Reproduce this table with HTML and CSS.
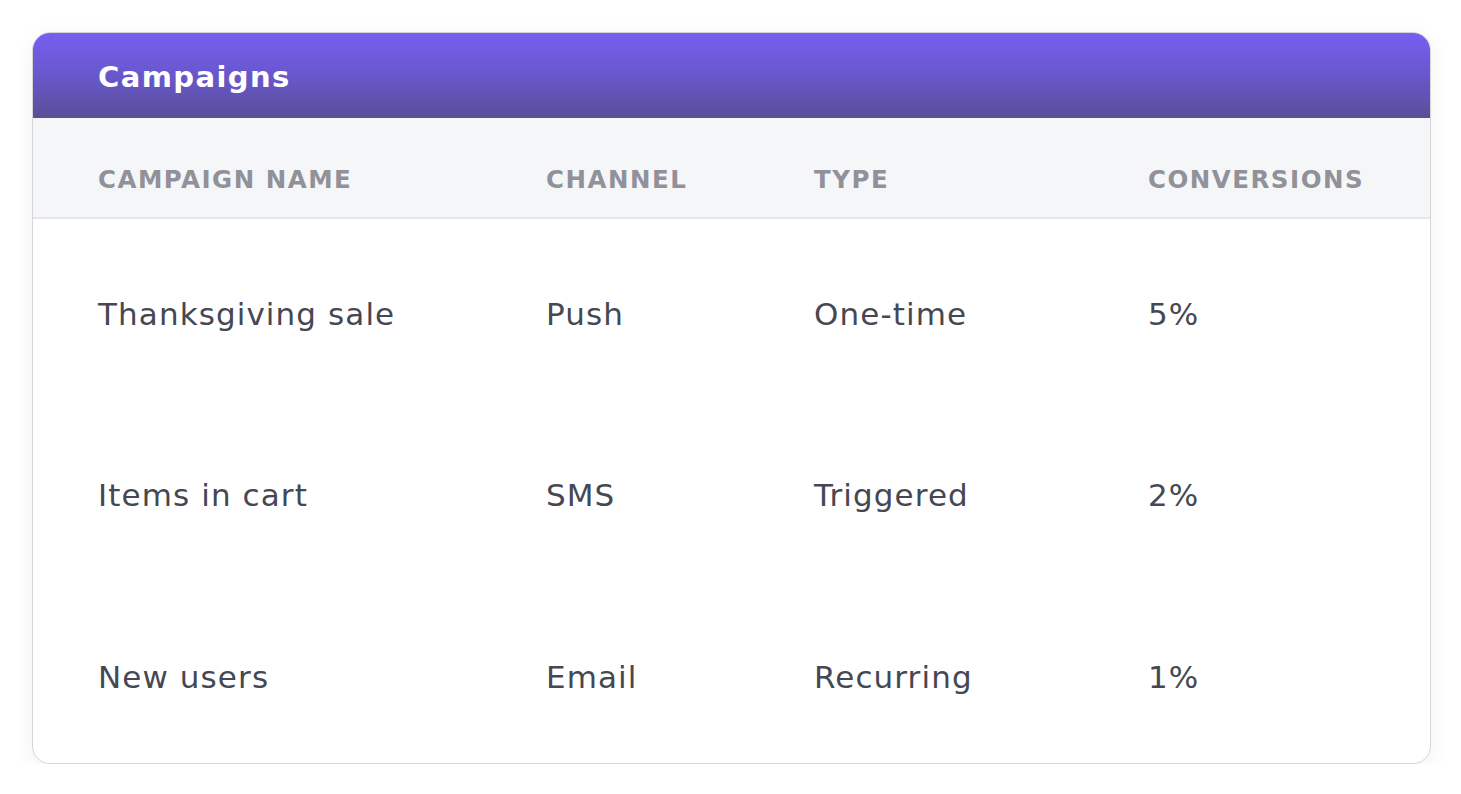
FILE: index.html
```html
<!DOCTYPE html>
<html>
<head>
<meta charset="utf-8">
<link rel="stylesheet" href="styles.css">
</head>
<body>
<div class="card">
  <div class="card-head"><h1 class="title">Campaigns</h1></div>
  <div class="row row-head">
    <div class="cell">CAMPAIGN NAME</div>
    <div class="cell">CHANNEL</div>
    <div class="cell">TYPE</div>
    <div class="cell">CONVERSIONS</div>
  </div>
  <div class="row">
    <div class="cell">Thanksgiving sale</div>
    <div class="cell">Push</div>
    <div class="cell">One-time</div>
    <div class="cell">5%</div>
  </div>
  <div class="row">
    <div class="cell">Items in cart</div>
    <div class="cell">SMS</div>
    <div class="cell">Triggered</div>
    <div class="cell">2%</div>
  </div>
  <div class="row">
    <div class="cell">New users</div>
    <div class="cell">Email</div>
    <div class="cell">Recurring</div>
    <div class="cell">1%</div>
  </div>
</div>
</body>
</html>
```
FILE: styles.css
```css
* { box-sizing: border-box; }
html, body { margin: 0; padding: 0; background: #ffffff; }
body {
  padding: 32px 0 0 32px;
  font-family: "DejaVu Sans", "Open Sans", sans-serif;
}
.card {
  width: 1399px;
  height: 732px;
  border: 1.5px solid #d6d6d8;
  border-radius: 18px;
  background: #fff;
  overflow: hidden;
  box-shadow: 0 4px 22px rgba(0, 0, 0, 0.06);
  display: flex;
  flex-direction: column;
}
.card-head {
  height: 85px;
  flex: none;
  background: linear-gradient(to bottom, #775ef1 0%, #6a58d0 45%, #5a4f98 100%);
  display: flex;
  align-items: center;
  padding-left: 65px;
}
.title {
  margin: 0;
  color: #fff;
  font-family: "DejaVu Sans", sans-serif;
  font-weight: 700;
  font-size: 29px;
  letter-spacing: 1.4px;
  position: relative;
  top: 1px;
}
.row {
  display: grid;
  grid-template-columns: 448px 268px 334px 1fr;
  padding-left: 65px;
  padding-top: 9px;
  align-items: center;
  flex: 1;
  font-size: 31px;
  letter-spacing: 1.1px;
  color: #454852;
}
.row-head {
  flex: none;
  height: 101px;
  background: #f5f6f8;
  border-bottom: 2px solid #e4e5e9;
  font-weight: 700;
  font-size: 24.5px;
  letter-spacing: 1.5px;
  color: #919199;
  padding-top: 24px;
}
.cell { white-space: nowrap; }
```
